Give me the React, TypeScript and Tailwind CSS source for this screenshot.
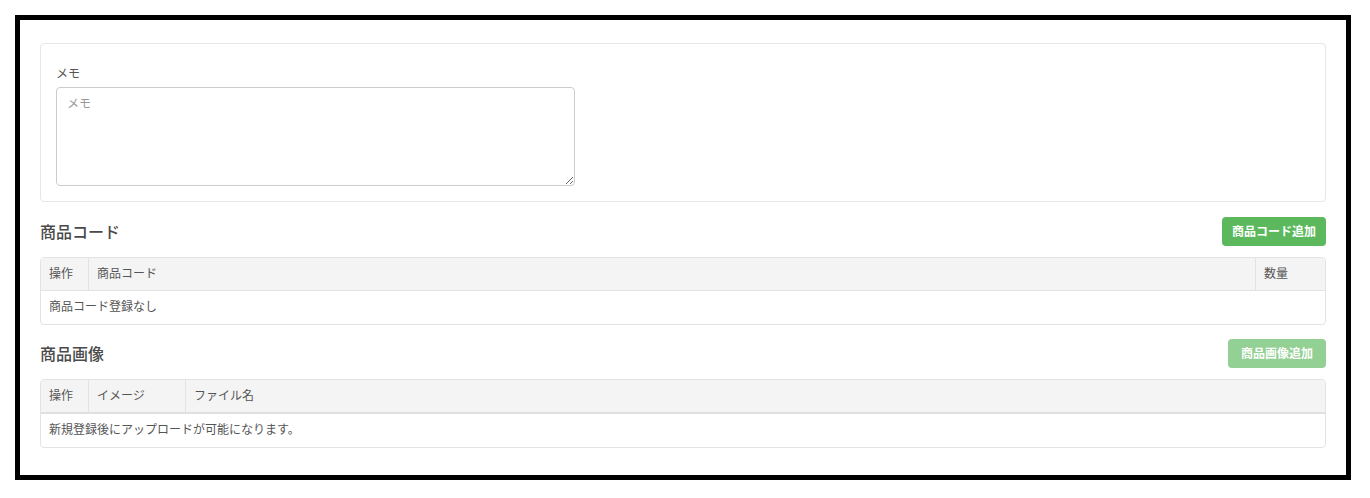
const font = "font-['Liberation_Sans','Noto_Sans_CJK_JP',sans-serif]";

function SectionHeader({
  title,
  button,
  disabled,
  first,
}: {
  title: string;
  button: string;
  disabled?: boolean;
  first?: boolean;
}) {
  return (
    <div className={`${first ? 'mt-[15px]' : 'mt-[14px]'} mb-[11px] flex h-[29px] items-center justify-between`}>
      <h3 className="translate-y-[1px] text-[16px] leading-[20px] font-medium text-[#4a4a4a]">{title}</h3>
      <button
        disabled={disabled}
        className={`h-[29px] rounded-[4px] px-[10px] text-[12px] font-bold text-white ${
          disabled ? 'w-[98px] bg-[#93d093]' : 'w-[104px] bg-[#5cb85c]'
        }`}
      >
        {button}
      </button>
    </div>
  );
}

function Table({
  cols,
  empty,
  thick,
}: {
  cols: { label: string; cls: string }[];
  empty: string;
  thick?: boolean;
}) {
  return (
    <div className="overflow-hidden rounded-[4px] border border-[#e3e3e3] text-[12px] text-[#555]">
      <div className={`flex bg-[#f4f4f4] ${thick ? 'border-b-2 border-[#e0e0e0]' : 'border-b border-[#e3e3e3]'}`}>
        {cols.map((c, i) => (
          <div
            key={c.label}
            className={`h-[32px] px-[8px] leading-[33px] ${c.cls} ${
              i < cols.length - 1 ? 'border-r border-[#e3e3e3]' : ''
            }`}
          >
            {c.label}
          </div>
        ))}
      </div>
      <div className="h-[33px] px-[8px] leading-[33px]">{empty}</div>
    </div>
  );
}

export default function App() {
  return (
    <div className={`bg-white pt-[15px] pb-[19px] pl-[15px] pr-[19px] ${font}`}>
      <div className="border-[5px] border-black px-5 pt-[23px] pb-[27px]">
        {/* Memo */}
        <div className="rounded-[4px] border border-[#e6e6e6] px-[15px] pt-[22px] pb-[15px]">
          <label className="mb-[4px] block text-[12px] leading-[17px] text-[#555]">メモ</label>
          <textarea
            placeholder="メモ"
            className="block h-[99px] w-[519px] rounded-[4px] border border-[#ccc] px-[10px] py-[7px] text-[12px] text-[#555] placeholder:text-[#999] outline-none"
          />
        </div>

        {/* 商品コード */}
        <SectionHeader title="商品コード" button="商品コード追加" first />
        <Table
          cols={[
            { label: '操作', cls: 'w-[48px]' },
            { label: '商品コード', cls: 'flex-1' },
            { label: '数量', cls: 'w-[69px]' },
          ]}
          empty="商品コード登録なし"
        />

        {/* 商品画像 */}
        <SectionHeader title="商品画像" button="商品画像追加" disabled />
        <Table
          cols={[
            { label: '操作', cls: 'w-[48px]' },
            { label: 'イメージ', cls: 'w-[97px]' },
            { label: 'ファイル名', cls: 'flex-1' },
          ]}
          empty="新規登録後にアップロードが可能になります。"
          thick
        />
      </div>
    </div>
  );
}
